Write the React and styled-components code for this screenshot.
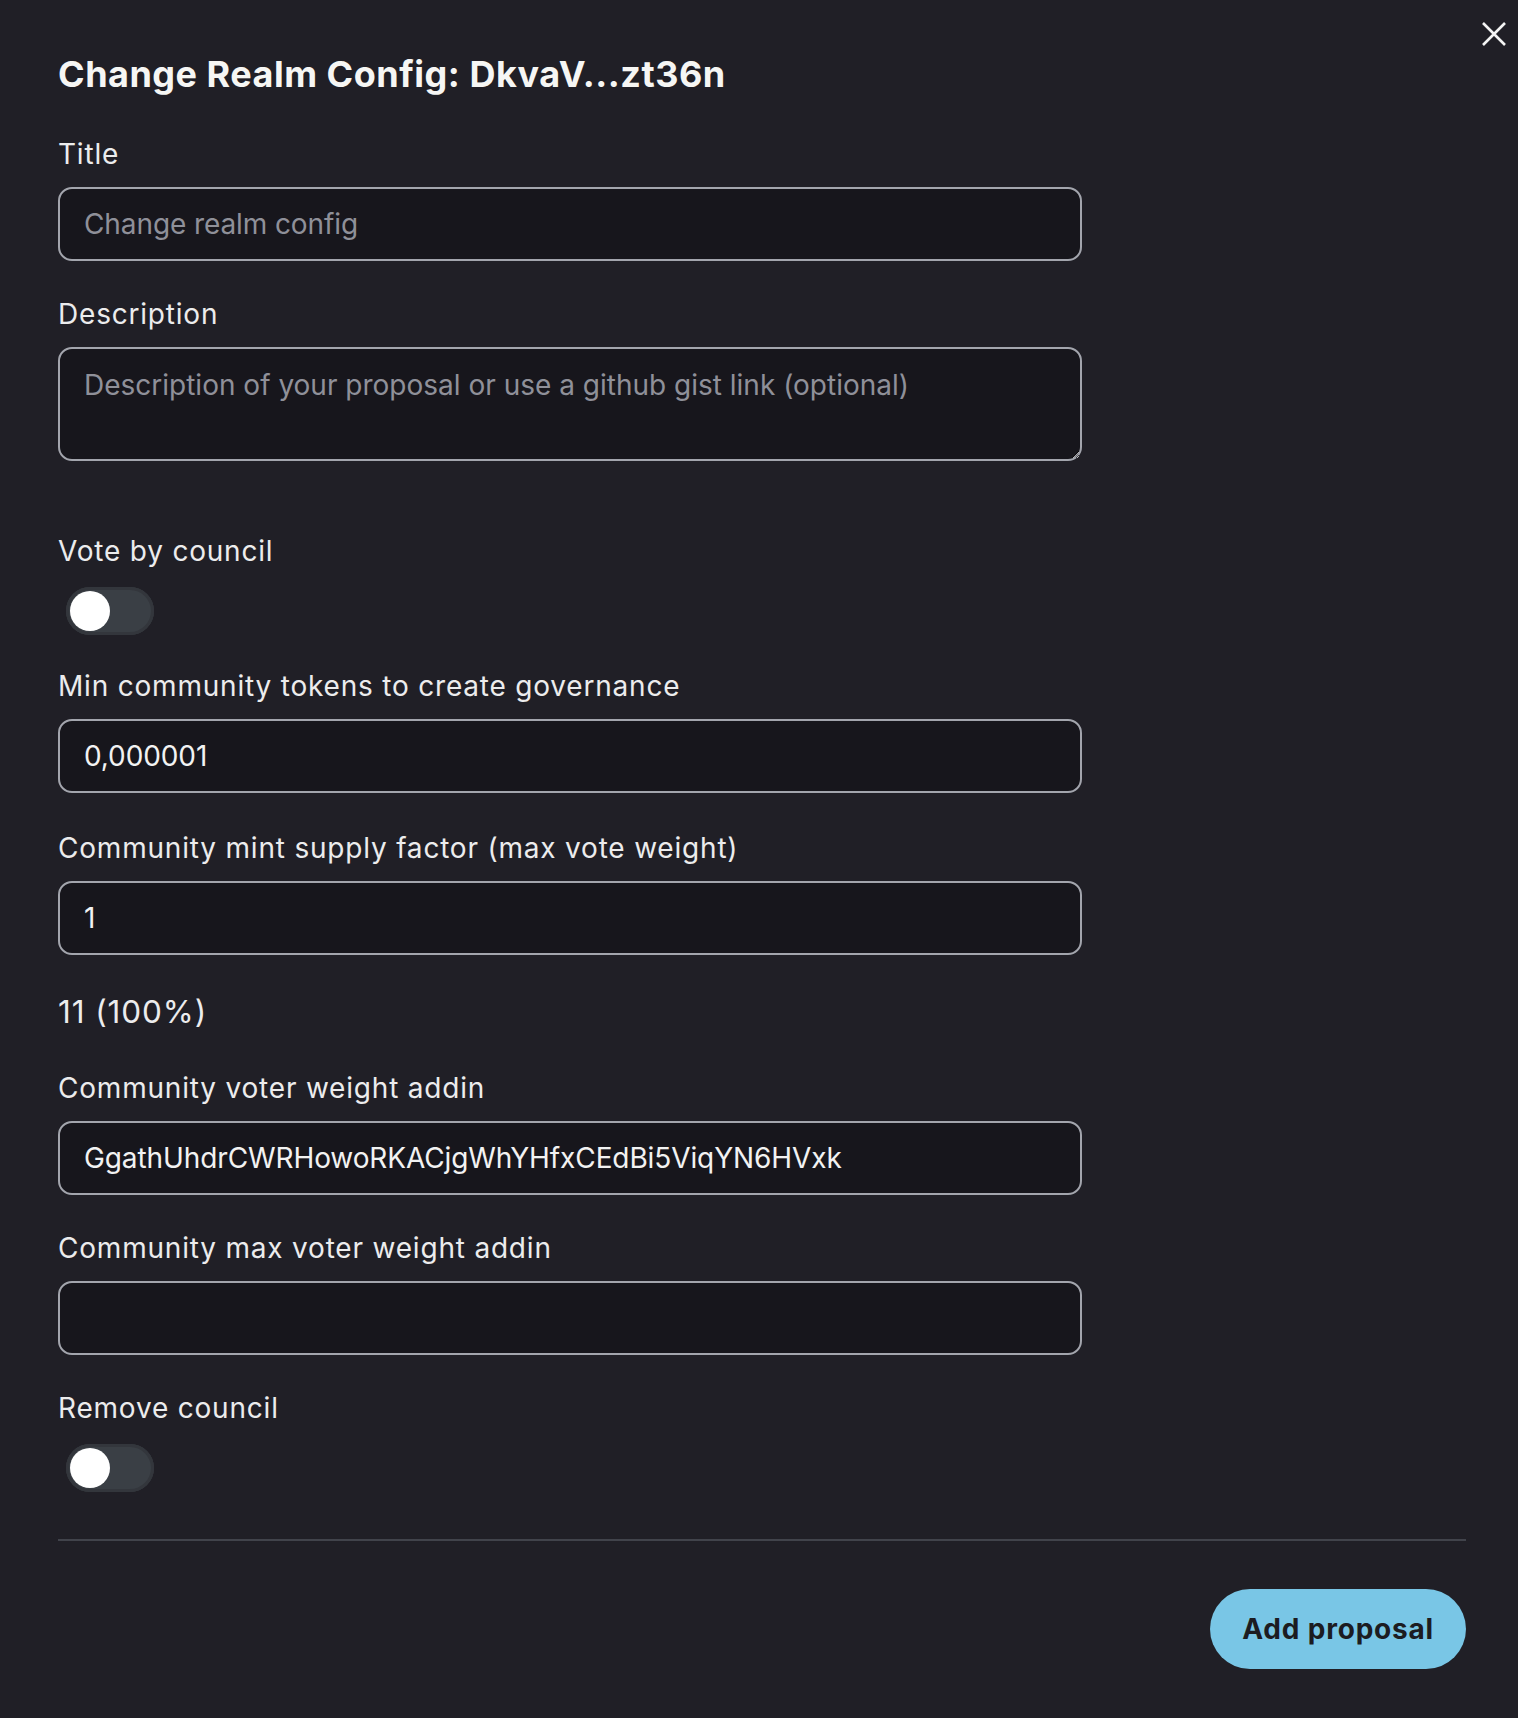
import React from 'react'
import styled, { createGlobalStyle } from 'styled-components'

const Global = createGlobalStyle`
  html, body {
    margin: 0;
    padding: 0;
    background: #201f26;
  }
  body {
    font-family: Inter, 'Noto Sans', sans-serif;
    color: #ececed;
  }
  * { box-sizing: border-box; }
`

const Modal = styled.div`
  position: relative;
  min-height: 1718px;
  padding: 49px 52px 40px 58px;
  background: #201f26;
`
const CloseButton = styled.button`
  position: absolute;
  top: 22px;
  right: 11px;
  width: 26px;
  height: 24px;
  padding: 0;
  border: 0;
  background: none;
  display: flex;
  align-items: center;
  justify-content: center;
  cursor: pointer;
`
const Heading = styled.h2`
  margin: 0 0 34px;
  font-size: 36px;
  line-height: 50px;
  font-weight: 700;
  letter-spacing: 0.5px;
  color: #f6f6f4;
`
const Field = styled.div`
  display: flex;
  flex-direction: column;
  margin-top: ${props => props.gap || '32px'};
  &:first-of-type {
    margin-top: 0;
  }
`
const Label = styled.label`
  font-size: 28px;
  line-height: 42px;
  color: #ececed;
  letter-spacing: 0.8px;
  margin-bottom: ${props => props.space || '12px'};
`
const Input = styled.input`
  width: 1024px;
  height: 74px;
  padding: 0 24px;
  border: 2px solid #a3a5ad;
  border-radius: 14px;
  background: #17161c;
  color: #f2f2f2;
  font-family: Inter, 'Noto Sans', sans-serif;
  font-size: 28px;
  letter-spacing: -0.1px;
  outline: none;
  &::placeholder {
    color: #8f9099;
  }
`
const TextArea = styled.textarea`
  width: 1024px;
  height: 114px;
  padding: 15px 24px;
  border: 2px solid #a3a5ad;
  border-radius: 14px;
  background: #17161c;
  color: #f2f2f2;
  font-family: Inter, 'Noto Sans', sans-serif;
  font-size: 28px;
  line-height: 42px;
  outline: none;
  display: block;
  &::placeholder {
    color: #8f9099;
  }
`
const Toggle = styled.div`
  width: 88px;
  height: 48px;
  margin-left: 8px;
  border-radius: 24px;
  background: #3a3f45;
  box-shadow: inset 0 0 0 3px #33363c;
  padding: 4px;
  display: flex;
  align-items: center;
  justify-content: ${props => (props.on ? 'flex-end' : 'flex-start')};
`
const Knob = styled.span`
  width: 40px;
  height: 40px;
  border-radius: 50%;
  background: #ffffff;
`
const Summary = styled.div`
  margin-top: 33px;
  font-size: 31.5px;
  line-height: 47px;
  letter-spacing: 0.9px;
  color: #ececed;
`
const Divider = styled.hr`
  margin: 47px 0 0;
  border: 0;
  height: 2px;
  background: #41434b;
`
const Footer = styled.div`
  display: flex;
  justify-content: flex-end;
  margin-top: 48px;
`
const PrimaryButton = styled.button`
  height: 80px;
  padding: 0 32px;
  border: 0;
  border-radius: 40px;
  background: #79c6e6;
  color: #1c1c21;
  font-family: Inter, 'Noto Sans', sans-serif;
  font-size: 28px;
  font-weight: 700;
  letter-spacing: 0.8px;
  cursor: pointer;
`

const fields = [
  { label: 'Min community tokens to create governance', value: '0,000001', gap: '30px' },
  { label: 'Community mint supply factor (max vote weight)', value: '1', gap: '34px' },
]

const addins = [
  { label: 'Community voter weight addin', value: 'GgathUhdrCWRHowoRKACjgWhYHfxCEdBi5ViqYN6HVxk' },
  { label: 'Community max voter weight addin', value: '' },
]

const App = () => (
  <>
    <Global />
    <Modal>
      <CloseButton aria-label="close">
        <svg width="26" height="24" viewBox="0 0 26 24" fill="none">
          <path d="M2 1L24 23M24 1L2 23" stroke="#f4f4f4" strokeWidth="2.6" />
        </svg>
      </CloseButton>
      <Heading>Change Realm Config: DkvaV...zt36n</Heading>
      <Field>
        <Label>Title</Label>
        <Input placeholder="Change realm config" readOnly />
      </Field>
      <Field>
        <Label>Description</Label>
        <TextArea placeholder="Description of your proposal or use a github gist link (optional)" readOnly />
      </Field>
      <Field gap="69px">
        <Label space="15px">Vote by council</Label>
        <Toggle>
          <Knob />
        </Toggle>
      </Field>
      {fields.map(f => (
        <Field key={f.label} gap={f.gap}>
          <Label>{f.label}</Label>
          <Input defaultValue={f.value} readOnly />
        </Field>
      ))}
      <Summary>11 (100%)</Summary>
      {addins.map(f => (
        <Field key={f.label}>
          <Label>{f.label}</Label>
          <Input defaultValue={f.value} readOnly />
        </Field>
      ))}
      <Field>
        <Label space="15px">Remove council</Label>
        <Toggle>
          <Knob />
        </Toggle>
      </Field>
      <Divider />
      <Footer>
        <PrimaryButton>Add proposal</PrimaryButton>
      </Footer>
    </Modal>
  </>
)

export default App
